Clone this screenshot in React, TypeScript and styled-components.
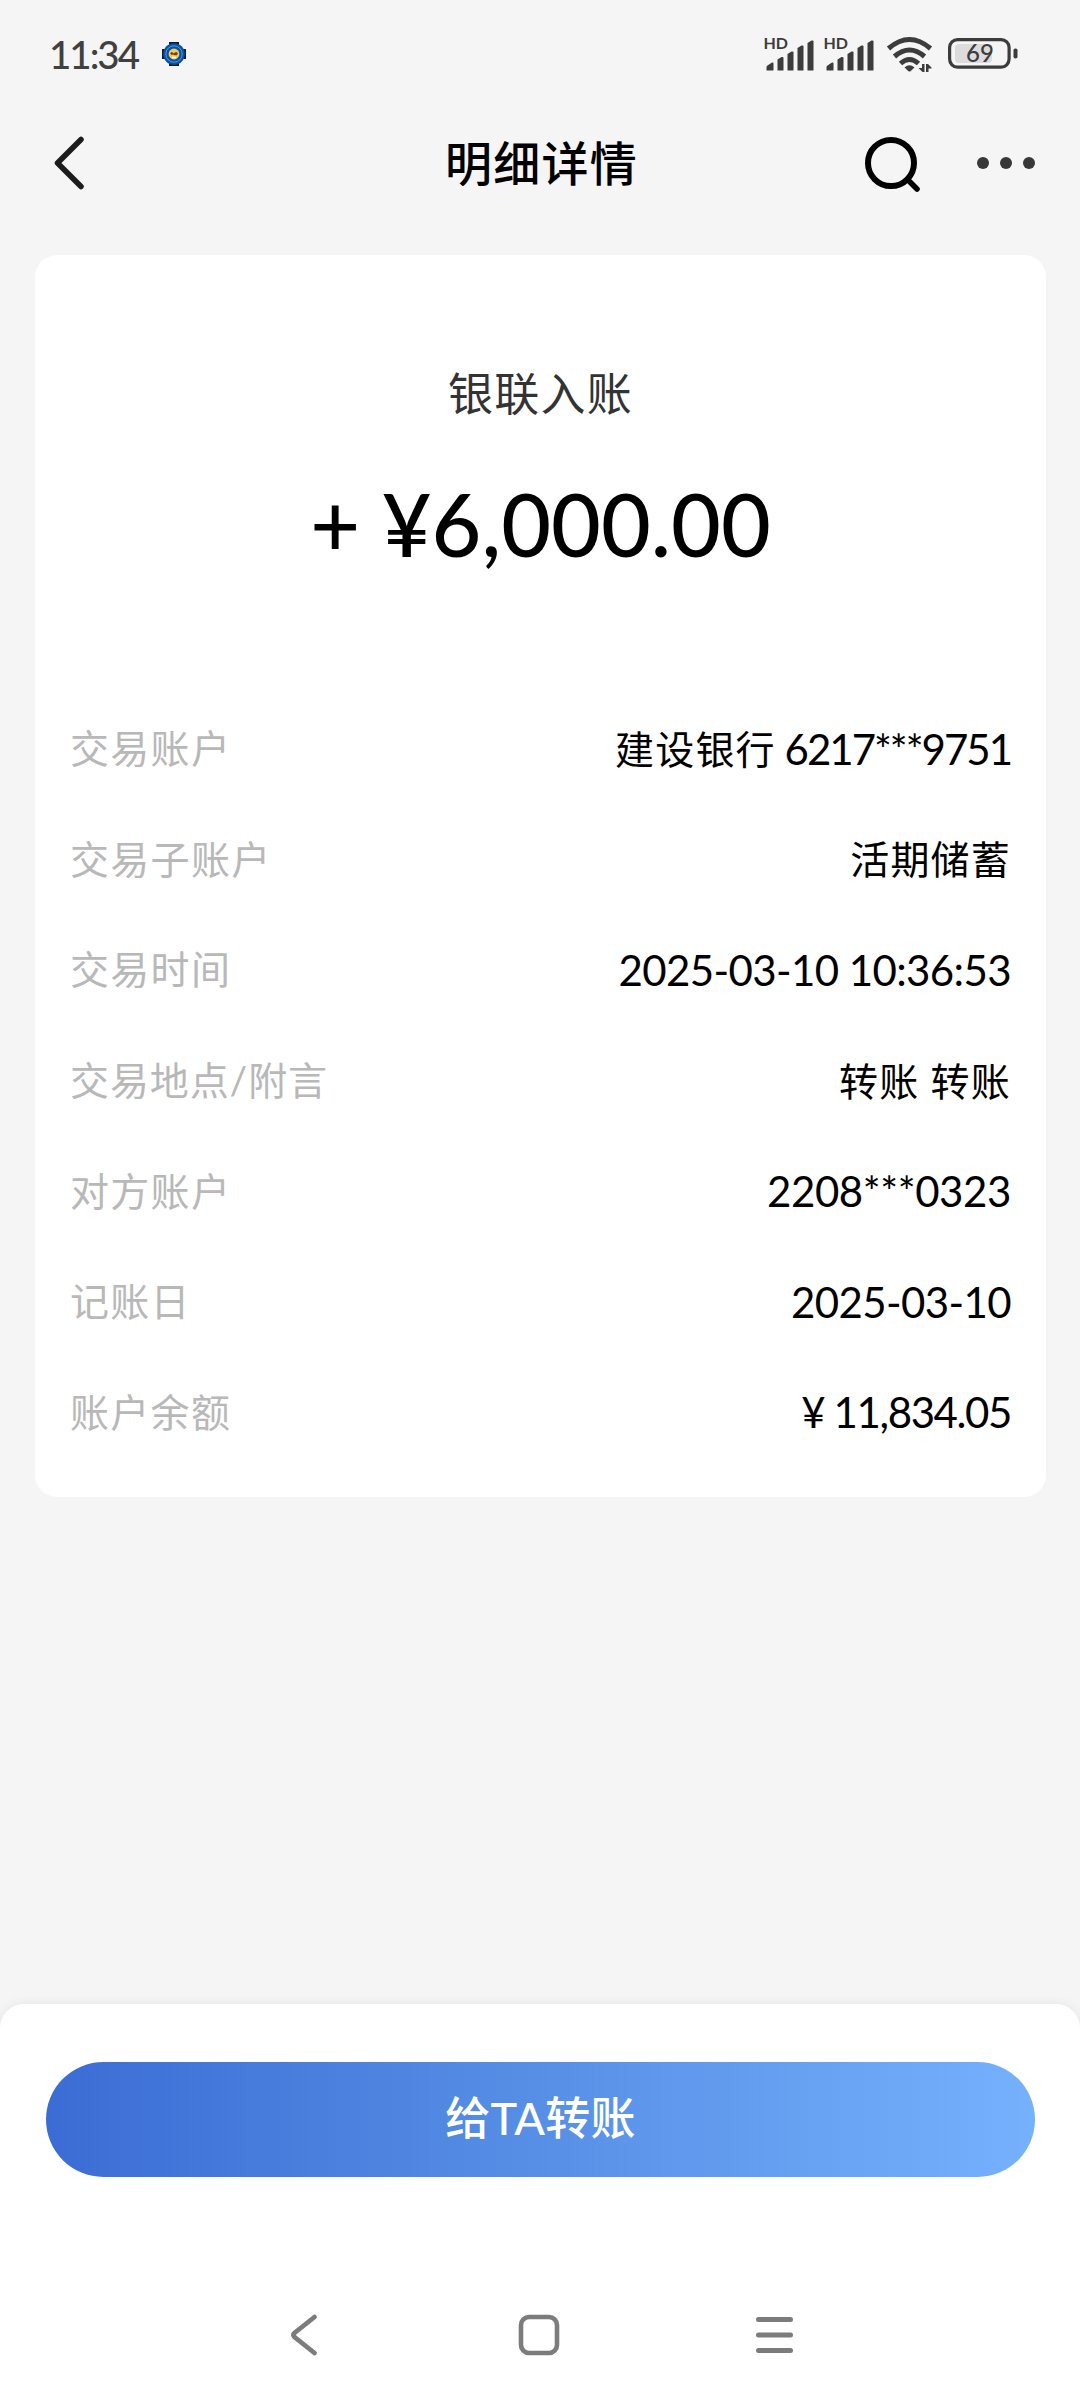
import React from "react";
import styled, { createGlobalStyle } from "styled-components";

const GlobalStyle = createGlobalStyle`
  * { box-sizing: border-box; }
  body {
    margin: 0;
    background: #f5f5f5;
    font-family: Lato, "Noto Sans CJK SC", sans-serif;
  }
`;

const Screen = styled.div`
  width: 1080px;
  height: 2400px;
  display: flex;
  flex-direction: column;
  background: #f5f5f5;
  overflow: hidden;
`;

const StatusBar = styled.div`
  height: 108px;
  display: flex;
  justify-content: space-between;
  padding: 0 61px 0 49px;
`;

const StatusGroup = styled.div`
  display: flex;
  align-items: center;
  height: 108px;
`;

const Clock = styled.span`
  font-size: 38.5px;
  line-height: 44px;
  font-weight: 500;
  letter-spacing: -2px;
  color: #404040;
  width: 113px;
`;

const Header = styled.header`
  height: 110px;
  display: grid;
  grid-template-columns: 300px 1fr 300px;
  align-items: center;
  padding: 0 44px 0 47px;
`;

const Title = styled.h1`
  margin: 0;
  text-align: center;
  font-size: 47px;
  line-height: 60px;
  font-weight: 500;
  letter-spacing: 1.2px;
  color: #000;
`;

const HeaderActions = styled.div`
  display: flex;
  align-items: center;
  justify-content: flex-end;
  gap: 55px;
`;

const Card = styled.main`
  margin: 37px 34px 0 35px;
  height: 1242px;
  border-radius: 22px;
  background: #fff;
  padding: 107px 35px 0 35px;
`;

const Kind = styled.div`
  height: 64px;
  line-height: 64px;
  text-align: center;
  font-size: 45px;
  letter-spacing: 1.3px;
  color: #333;
`;

const Amount = styled.div`
  height: 100px;
  margin: 48px 0 119px;
  line-height: 100px;
  text-align: center;
  font-size: 86px;
  font-weight: 500;
  color: #000;
`;

const Row = styled.div`
  height: 110.6px;
  padding-top: 1px;
  display: flex;
  align-items: center;
  justify-content: space-between;
`;

const Label = styled.span<{ $track?: number }>`
  margin-bottom: 1px;
  font-size: 39px;
  line-height: 56px;
  letter-spacing: ${(p) => p.$track ?? 1.3}px;
  color: #b8b8b8;
`;

const Value = styled.span<{ $track?: number }>`
  font-size: 42px;
  line-height: 56px;
  letter-spacing: ${(p) => p.$track ?? 0}px;
  white-space: pre;
  color: #000;
`;

const Han = styled.span`
  font-size: 39px;
  line-height: 1;
  vertical-align: 1px;
  letter-spacing: 1.2px;
`;

const Spacer = styled.div`
  flex: 1;
`;

const Sheet = styled.footer`
  height: 396px;
  display: flex;
  flex-direction: column;
  padding-top: 58px;
  background: #fff;
  border-radius: 24px 24px 0 0;
  box-shadow: 0 0 12px rgba(0, 0, 0, 0.08);
`;

const TransferButton = styled.button`
  height: 115px;
  margin: 0 45px 0 46px;
  border: 0;
  padding: 0 0 4px;
  border-radius: 58px;
  background: linear-gradient(90deg, #3b6cd4 0%, #578fe6 50%, #75b1fd 100%);
  color: #fff;
  font-family: inherit;
  font-size: 45px;
  line-height: 60px;
  letter-spacing: 0.3px;
  font-weight: 500;
`;

const NavBar = styled.nav`
  flex: 1;
  display: flex;
  align-items: center;
  justify-content: center;
  padding: 92px 1px 0 0;
  gap: 193px;
`;

const BadgeIcon = () => (
  <svg width="24" height="24" viewBox="0 0 24 24">
    <path d="M7 0h10v3l4 4h3v10h-3l-4 4v3H7v-3l-4-4H0V7h3l4-4z" fill="#0a1d33" />
    <circle cx="12" cy="12" r="10.8" fill="#0c4fa8" />
    <circle cx="12" cy="12" r="8.2" fill="none" stroke="#4b9bea" strokeWidth="1" />
    <circle cx="12" cy="12" r="5.4" fill="#ecd052" />
    <path d="M8 11l2-1 1.5 1.2L14 10l2 1-1 2.2h-2.6L11 12.4 9.4 13z" fill="#8a3b12" />
    <path d="M10 15.5h4" stroke="#fff" strokeWidth="1.6" />
  </svg>
);

const SignalIcon = () => (
  <svg width="60" height="42" viewBox="-4 -3 60 42" fill="#3c3c3c">
    <text x="-0.500" y="13" fontSize="16" fontWeight="700" fontFamily="Lato">HD</text>
    <path d="M2.500 34V31Q2.500 30 3.500 29.500L8 26.500Q9.500 26 9.500 27.500V34Q9.500 34.500 9 34.500H3Q2.500 34.500 2.500 34z" />
    <path d="M13.500 34V23.500L17.500 21Q19.500 20.500 19.500 22V34Q19.500 34.500 19 34.500H14Q13.500 34.500 13.500 34z" />
    <path d="M23.500 34V18L27.500 15.500Q29.500 15 29.500 16.500V34Q29.500 34.500 29 34.500H24Q23.500 34.500 23.500 34z" />
    <path d="M33.500 34V12L37.500 9.500Q39.500 9 39.500 10.500V34Q39.500 34.500 39 34.500H34Q33.500 34.500 33.500 34z" />
    <path d="M43.500 34V7L47.500 4.500Q49.500 4 49.500 5.500V34Q49.500 34.500 49 34.500H44Q43.500 34.500 43.500 34z" />
  </svg>
);

const WifiIcon = () => (
  <svg width="68" height="36" viewBox="-4 0 68 36">
    <g fill="none" stroke="#3c3c3c" strokeWidth="5">
      <path d="M4.500 12.500Q25.500 -5.500 46.500 12.500" />
      <path d="M10.500 20.500Q25.500 7.500 40.500 20.500" />
      <path d="M16.500 27.500Q25.500 19.500 34.500 27.500" />
    </g>
    <path d="M20.500 31.500Q25.500 27 30.500 31.500L26.500 35.200Q25.500 36 24.500 35.200z" fill="#3c3c3c" />
    <path d="M38 28H40.500V36H38.500L34.500 32H38zM42 36V28H44L47.500 31.500V32.500H44.500V36z" fill="#3c3c3c" />
  </svg>
);

const BatteryIcon = () => (
  <svg width="71" height="32" viewBox="0 0 71 32">
    <rect x="7" y="6" width="37" height="19" rx="4" fill="#dcdcdc" />
    <rect x="1.600" y="1.600" width="59.500" height="27.500" rx="8" fill="none" stroke="#3c3c3c" strokeWidth="3.200" />
    <rect x="65.500" y="10.500" width="4" height="10" rx="1.800" fill="#3c3c3c" />
    <text x="32" y="24" fontSize="24" fontWeight="500" fontFamily="Lato" textAnchor="middle" fill="#3c3c3c">69</text>
  </svg>
);

const BackIcon = () => (
  <svg width="46" height="60" viewBox="-3 0 46 60" fill="none" stroke="#1c1c1c" strokeWidth="5.500" strokeLinecap="round" strokeLinejoin="round">
    <path d="M31 6.500L7.500 30L31 53.500" />
  </svg>
);

const SearchIcon = () => (
  <svg width="57" height="58" viewBox="0 -1 57 58" fill="none" stroke="#000">
    <circle cx="27" cy="28" r="23" strokeWidth="6" />
    <path d="M45 46L53 54" strokeWidth="5.500" strokeLinecap="round" />
  </svg>
);

const MoreIcon = () => (
  <svg width="60" height="14" viewBox="0 0 60 14" fill="#383838">
    <circle cx="7" cy="7" r="6" />
    <circle cx="30" cy="7" r="6" />
    <circle cx="53" cy="7" r="6" />
  </svg>
);

const NavBack = () => (
  <svg width="40" height="44" viewBox="0 0 40 44" fill="none" stroke="#7c7c7c" strokeWidth="4.800" strokeLinecap="round">
    <path d="M30.500 4L10.500 20Q8.500 22 10.500 24L30.500 40" />
  </svg>
);

const NavHome = () => (
  <svg width="44" height="44" viewBox="0 0 44 44" fill="none" stroke="#7c7c7c" strokeWidth="4.600">
    <rect x="4" y="4" width="36" height="36" rx="8" />
  </svg>
);

const NavMenu = () => (
  <svg width="42" height="44" viewBox="0 0 42 44" stroke="#7c7c7c" strokeWidth="5" strokeLinecap="round">
    <path d="M4.500 6.500H36.500M4.500 22H36.500M4.500 37.500H36.500" />
  </svg>
);

type Detail = {
  label: string;
  labelTrack?: number;
  han?: string;
  value?: string;
  track?: number;
};

const details: Detail[] = [
  { label: "交易账户", han: "建设银行", value: " 6217***9751", track: -2 },
  { label: "交易子账户", han: "活期储蓄" },
  { label: "交易时间", value: "2025-03-10 10:36:53", track: -0.6 },
  { label: "交易地点/附言", labelTrack: 0.9, han: "转账 转账" },
  { label: "对方账户", value: "2208***0323", track: -0.4 },
  { label: "记账日", value: "2025-03-10", track: -0.6 },
  { label: "账户余额", value: "¥ 11,834.05", track: -1.4 },
];

export default function App() {
  return (
    <>
      <GlobalStyle />
      <Screen>
        <StatusBar>
          <StatusGroup>
            <Clock>11:34</Clock>
            <BadgeIcon />
          </StatusGroup>
          <StatusGroup>
            <SignalIcon />
            <SignalIcon />
            <WifiIcon />
            <BatteryIcon />
          </StatusGroup>
        </StatusBar>
        <Header>
          <BackIcon />
          <Title>明细详情</Title>
          <HeaderActions>
            <SearchIcon />
            <MoreIcon />
          </HeaderActions>
        </Header>
        <Card>
          <Kind>银联入账</Kind>
          <Amount>+ ¥6,000.00</Amount>
          {details.map((d) => (
            <Row key={d.label}>
              <Label $track={d.labelTrack}>{d.label}</Label>
              <Value $track={d.track}>
                {d.han && <Han>{d.han}</Han>}
                {d.value}
              </Value>
            </Row>
          ))}
        </Card>
        <Spacer />
        <Sheet>
          <TransferButton>给TA转账</TransferButton>
          <NavBar>
            <NavBack />
            <NavHome />
            <NavMenu />
          </NavBar>
        </Sheet>
      </Screen>
    </>
  );
}
